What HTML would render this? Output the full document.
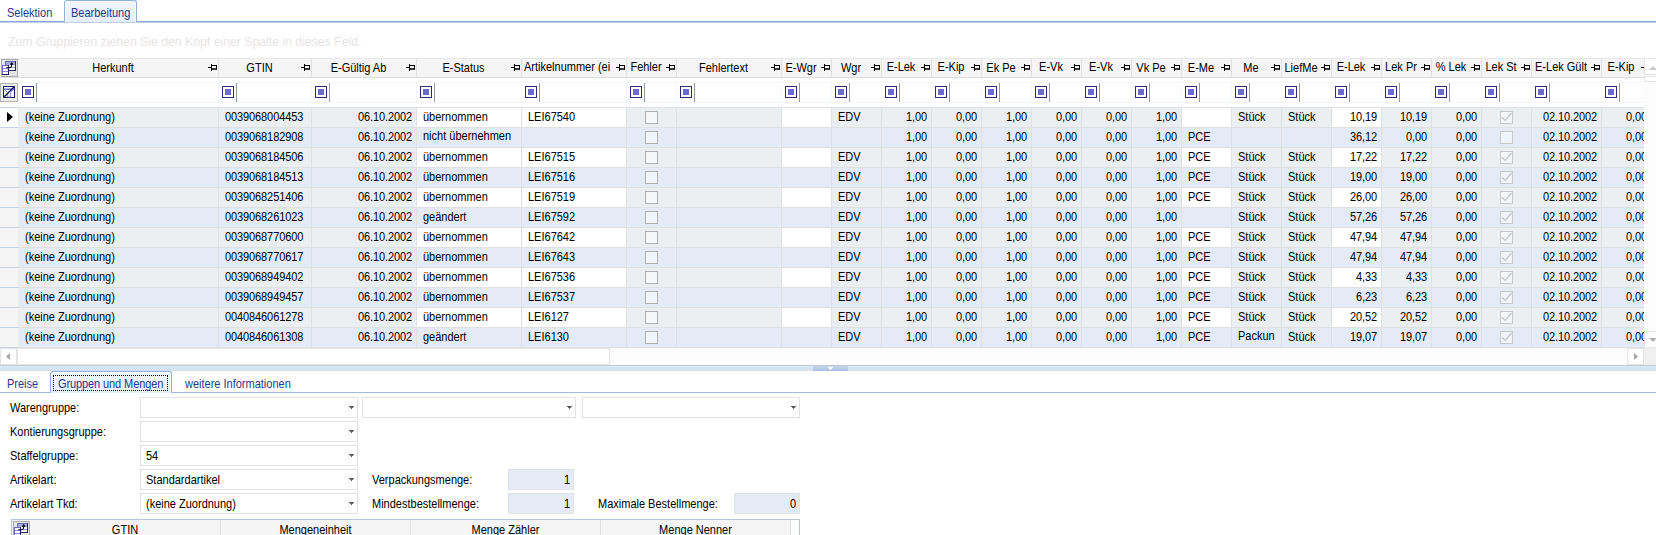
<!DOCTYPE html>
<html lang="de"><head><meta charset="utf-8"><title>Bearbeitung</title>
<style>
*,*:before,*:after{box-sizing:border-box;margin:0;padding:0}
html,body{width:1656px;height:535px;overflow:hidden;background:#fff}
body{position:relative;font-family:"Liberation Sans",Arial,sans-serif;font-size:11px;color:#000;line-height:13px}
i,b{display:block;font-style:normal;font-weight:normal}
.abs{position:absolute}
.t{display:inline-block;transform:scaleY(1.125);transform-origin:0 10px;line-height:13px;white-space:nowrap}
/* top tabs */
.tline{position:absolute;left:0;top:21px;width:1656px;height:1px;background:#86abdf}
.tline2{position:absolute;left:0;top:22px;width:1656px;height:1px;background:#bfcde0}
.tab{position:absolute;color:#1e3c8c;white-space:nowrap}
.tabsel{position:absolute;border:1px solid #8fb1e2;border-bottom:none;border-radius:3px 3px 0 0;background:linear-gradient(#f1f6fd,#e5edf9);box-shadow:inset 1px 1px 0 #fff,inset -1px 0 0 #fff}
.gp{position:absolute;left:8px;top:35px;font-size:12.25px;line-height:14px;color:#e7e4e4;white-space:nowrap}
/* grid */
.grid{position:absolute;left:0;top:58px;width:1656px;height:307px;overflow:hidden}
.hrow{position:absolute;left:0;top:0;height:20px;width:1644px;display:flex;background:#f5f5f5;border-top:1px solid #e8e8e8;border-bottom:1px solid #dcdcdc;overflow:hidden}
.hsel{flex:none;width:19px;height:18px;position:relative;background:#f5f5f5}
.hsel:before{content:"";position:absolute;left:1px;top:0;width:17px;height:18px;background:#e6e6e6;border:1px solid #ababab}
.hsel svg{position:absolute;left:1px;top:0}
.hc{flex:none;height:18px;position:relative;border-right:1px solid #e0e0e0;white-space:nowrap;overflow:hidden}
.hc .ht{position:absolute;left:0;right:11px;top:3px;text-align:center;line-height:13px;overflow:hidden}
.hc.u .ht{top:2px}
.hc.l .ht{top:2px;text-align:left;left:2px;right:14px}
.pin{position:absolute;right:1px;top:5px}
.frow{position:absolute;left:0;top:24px;height:22px;width:1644px;display:flex;overflow:hidden}
.fsel{flex:none;width:19px;height:20px;position:relative}
.fsel:before{content:"";position:absolute;left:0;top:1px;width:18px;height:19px;background:#ededea;border:1px solid #b2b2b2}
.fsel svg{position:absolute;left:3px;top:4px}
.fc{flex:none;height:21px;position:relative;border-top:1px solid #f3f6fc;border-bottom:1px solid #f3f6fc;border-right:1px solid #f3f6fc;margin-top:0}
.fi{position:absolute;left:3px;top:3px;width:12px;height:12px;border:1px solid #2c2c78;background:#fff}
.fi b{position:absolute;left:2px;top:2px;width:6px;height:6px;background:#6a6ad0}
.fl{position:absolute;left:17px;top:0;width:1px;height:19px;background:#9a9a9a}
.rows{position:absolute;left:0;top:49px;width:1644px;height:241px;overflow:hidden;border-top:1px solid #e0e0e0}
.row{display:flex;height:20px;width:1700px}
.rs{flex:none;width:19px;height:20px;background:#f5f5f5;border-right:1px solid #ebebeb;border-bottom:1px solid #c3d3e6;position:relative}
.cur .rs{background:#fff}
.rstop{position:absolute;left:0;top:49px;width:18px;height:1px;background:#c3d3e6}
.tri{position:absolute;left:7px;top:4px;width:0;height:0;border-left:6px solid #000;border-top:5px solid transparent;border-bottom:5px solid transparent}
.c{flex:none;height:20px;border-right:1px solid #e0e0e0;border-bottom:1px solid #e0e0e0;padding:3px 4px 0 6px;white-space:nowrap;overflow:hidden;line-height:13px}
.odd .c{background:#eceff2}
.even .c{background:#e4ebf7}
.odd .c.w{background:#fff}
.c.hi{padding-top:2px}
.c.r{text-align:right}
.c.n{letter-spacing:-0.1px}
.c.cb,.c.cbd{padding:3px 0 0 18px}
.ck{width:13px;height:13px;border:1px solid #b0b0b0;background:rgba(255,255,255,.45)}
.ck.d{border-color:#c8c8c8}
.ck svg{display:block}
/* scrollbars */
.vs{position:absolute;left:1644px;top:0;width:12px;height:290px;background:#fcfcfc}
.hs{position:absolute;left:0;top:290px;width:1644px;height:17px;background:#fdfdfd}
.sb{position:absolute;background:#fff;border:1px solid #e4e4e4}
.corner{position:absolute;left:1644px;top:290px;width:12px;height:17px;background:#f0f0f0}
/* splitter */
.split{position:absolute;left:0;top:365px;width:1656px;height:6px;border-top:1px solid #bcc9da;background:linear-gradient(#e6eef9 0,#d6e3f3 30%,#d2e0f2 100%)}
.split i{position:absolute;left:813px;top:0;width:35px;height:5px;background:linear-gradient(#c6d5ec,#abc0e3)}
.split b{position:absolute;left:828px;top:1px;width:5px;height:3px;background:linear-gradient(#fff,#fff) 0 0/5px 1px no-repeat,linear-gradient(#fff,#fff) 1px 1px/3px 1px no-repeat,linear-gradient(#fff,#fff) 2px 2px/1px 1px no-repeat}
/* lower */
.lline{position:absolute;left:0;top:392px;width:1656px;height:1px;background:#9dbbe3}
.focus{position:absolute;border:1px dotted #000}
.lbl{position:absolute;left:10px;white-space:nowrap}
.combo{position:absolute;height:21px;border:1px solid #e2e2e2;background:#fff;padding:4px 0 0 5px;white-space:nowrap}
.combo:after{content:"";position:absolute;right:3px;top:8px;width:5px;height:3px;background:linear-gradient(#5e5e5e,#5e5e5e) 0 0/5px 1px no-repeat,linear-gradient(#5e5e5e,#5e5e5e) 1px 1px/3px 1px no-repeat,linear-gradient(#5e5e5e,#5e5e5e) 2px 2px/1px 1px no-repeat}
.num{position:absolute;height:21px;border:1px solid #e2e2e2;background:#e4ebf7;padding:4px 3px 0 0;text-align:right}
.g2{position:absolute;left:11px;top:519px;width:789px;height:20px;background:#fff;border:1px solid #b4c6dc;border-bottom:none;overflow:hidden}
.g2 .h{position:absolute;top:0;height:20px;background:#f5f5f5;border-right:1px solid #e0e0e0;text-align:center;line-height:13px;padding-top:4px}

</style></head><body>
<div class="tline"></div>
<div class="tab" style="left:7px;top:7px"><span class="t">Selektion</span></div>
<div class="tabsel" style="left:64px;top:0px;width:73px;height:22px"></div>
<div class="tline2"></div>
<div class="tab" style="left:71px;top:7px"><span class="t">Bearbeitung</span></div>
<div class="gp">Zum Gruppieren ziehen Sie den Kopf einer Spalte in dieses Feld.</div>

<div class="grid">
<div class="hrow">
<div class="hsel"><svg width="17" height="18" viewBox="0 0 17 18"><rect x="4.5" y="2.5" width="10" height="9" fill="#fff" stroke="#6c6cb4"/><path d="M14.5 2v10M4 11.5h11" stroke="#24245e" fill="none"/><rect x="5" y="3" width="9" height="3" fill="#a6a6de"/><path d="M5 8.5h9" stroke="#9c9cd8"/><rect x="1.5" y="6.5" width="6" height="9" fill="#fff" stroke="#6c6cb4"/><path d="M7.5 6v10M1 15.500h7" stroke="#24245e" fill="none"/><path d="M2 9.500h5M2 12.500h5" stroke="#8c8cd0"/><path d="M5.300 8.700h3.500q1.700 0 1.900-3.200" stroke="#000" stroke-width="1.100" fill="none"/><path d="M8.800 5.800h3.800l-1.900-2.800z" fill="#000"/></svg>
</div>
<div class="hc c" style="width:200px"><span class="ht"><span class="t">Herkunft</span></span><svg class="pin" width="9" height="7" viewBox="0 0 9 7"><path d="M0 3.5h3M3.5 0v7M4 1.5h5M4 5h5M8.5 1v4.5" stroke="#000" stroke-width="1" fill="none"/><path d="M4 4.5h5v1h-5z" fill="#000"/></svg></div>
<div class="hc c" style="width:93px"><span class="ht"><span class="t">GTIN</span></span><svg class="pin" width="9" height="7" viewBox="0 0 9 7"><path d="M0 3.5h3M3.5 0v7M4 1.5h5M4 5h5M8.5 1v4.5" stroke="#000" stroke-width="1" fill="none"/><path d="M4 4.5h5v1h-5z" fill="#000"/></svg></div>
<div class="hc c" style="width:105px"><span class="ht"><span class="t">E-Gültig Ab</span></span><svg class="pin" width="9" height="7" viewBox="0 0 9 7"><path d="M0 3.5h3M3.5 0v7M4 1.5h5M4 5h5M8.5 1v4.5" stroke="#000" stroke-width="1" fill="none"/><path d="M4 4.5h5v1h-5z" fill="#000"/></svg></div>
<div class="hc c" style="width:105px"><span class="ht"><span class="t">E-Status</span></span><svg class="pin" width="9" height="7" viewBox="0 0 9 7"><path d="M0 3.5h3M3.5 0v7M4 1.5h5M4 5h5M8.5 1v4.5" stroke="#000" stroke-width="1" fill="none"/><path d="M4 4.5h5v1h-5z" fill="#000"/></svg></div>
<div class="hc l" style="width:105px"><span class="ht"><span class="t">Artikelnummer (ei</span></span><svg class="pin" width="9" height="7" viewBox="0 0 9 7"><path d="M0 3.5h3M3.5 0v7M4 1.5h5M4 5h5M8.5 1v4.5" stroke="#000" stroke-width="1" fill="none"/><path d="M4 4.5h5v1h-5z" fill="#000"/></svg></div>
<div class="hc u" style="width:50px"><span class="ht"><span class="t">Fehler</span></span><svg class="pin" width="9" height="7" viewBox="0 0 9 7"><path d="M0 3.5h3M3.5 0v7M4 1.5h5M4 5h5M8.5 1v4.5" stroke="#000" stroke-width="1" fill="none"/><path d="M4 4.5h5v1h-5z" fill="#000"/></svg></div>
<div class="hc c" style="width:105px"><span class="ht"><span class="t">Fehlertext</span></span><svg class="pin" width="9" height="7" viewBox="0 0 9 7"><path d="M0 3.5h3M3.5 0v7M4 1.5h5M4 5h5M8.5 1v4.5" stroke="#000" stroke-width="1" fill="none"/><path d="M4 4.5h5v1h-5z" fill="#000"/></svg></div>
<div class="hc c" style="width:50px"><span class="ht"><span class="t">E-Wgr</span></span><svg class="pin" width="9" height="7" viewBox="0 0 9 7"><path d="M0 3.5h3M3.5 0v7M4 1.5h5M4 5h5M8.5 1v4.5" stroke="#000" stroke-width="1" fill="none"/><path d="M4 4.5h5v1h-5z" fill="#000"/></svg></div>
<div class="hc c" style="width:50px"><span class="ht"><span class="t">Wgr</span></span><svg class="pin" width="9" height="7" viewBox="0 0 9 7"><path d="M0 3.5h3M3.5 0v7M4 1.5h5M4 5h5M8.5 1v4.5" stroke="#000" stroke-width="1" fill="none"/><path d="M4 4.5h5v1h-5z" fill="#000"/></svg></div>
<div class="hc u" style="width:50px"><span class="ht"><span class="t">E-Lek</span></span><svg class="pin" width="9" height="7" viewBox="0 0 9 7"><path d="M0 3.5h3M3.5 0v7M4 1.5h5M4 5h5M8.5 1v4.5" stroke="#000" stroke-width="1" fill="none"/><path d="M4 4.5h5v1h-5z" fill="#000"/></svg></div>
<div class="hc u" style="width:50px"><span class="ht"><span class="t">E-Kip</span></span><svg class="pin" width="9" height="7" viewBox="0 0 9 7"><path d="M0 3.5h3M3.5 0v7M4 1.5h5M4 5h5M8.5 1v4.5" stroke="#000" stroke-width="1" fill="none"/><path d="M4 4.5h5v1h-5z" fill="#000"/></svg></div>
<div class="hc c" style="width:50px"><span class="ht"><span class="t">Ek Pe</span></span><svg class="pin" width="9" height="7" viewBox="0 0 9 7"><path d="M0 3.5h3M3.5 0v7M4 1.5h5M4 5h5M8.5 1v4.5" stroke="#000" stroke-width="1" fill="none"/><path d="M4 4.5h5v1h-5z" fill="#000"/></svg></div>
<div class="hc u" style="width:50px"><span class="ht"><span class="t">E-Vk</span></span><svg class="pin" width="9" height="7" viewBox="0 0 9 7"><path d="M0 3.5h3M3.5 0v7M4 1.5h5M4 5h5M8.5 1v4.5" stroke="#000" stroke-width="1" fill="none"/><path d="M4 4.5h5v1h-5z" fill="#000"/></svg></div>
<div class="hc u" style="width:50px"><span class="ht"><span class="t">E-Vk</span></span><svg class="pin" width="9" height="7" viewBox="0 0 9 7"><path d="M0 3.5h3M3.5 0v7M4 1.5h5M4 5h5M8.5 1v4.5" stroke="#000" stroke-width="1" fill="none"/><path d="M4 4.5h5v1h-5z" fill="#000"/></svg></div>
<div class="hc c" style="width:50px"><span class="ht"><span class="t">Vk Pe</span></span><svg class="pin" width="9" height="7" viewBox="0 0 9 7"><path d="M0 3.5h3M3.5 0v7M4 1.5h5M4 5h5M8.5 1v4.5" stroke="#000" stroke-width="1" fill="none"/><path d="M4 4.5h5v1h-5z" fill="#000"/></svg></div>
<div class="hc c" style="width:50px"><span class="ht"><span class="t">E-Me</span></span><svg class="pin" width="9" height="7" viewBox="0 0 9 7"><path d="M0 3.5h3M3.5 0v7M4 1.5h5M4 5h5M8.5 1v4.5" stroke="#000" stroke-width="1" fill="none"/><path d="M4 4.5h5v1h-5z" fill="#000"/></svg></div>
<div class="hc c" style="width:50px"><span class="ht"><span class="t">Me</span></span><svg class="pin" width="9" height="7" viewBox="0 0 9 7"><path d="M0 3.5h3M3.5 0v7M4 1.5h5M4 5h5M8.5 1v4.5" stroke="#000" stroke-width="1" fill="none"/><path d="M4 4.5h5v1h-5z" fill="#000"/></svg></div>
<div class="hc c" style="width:50px"><span class="ht"><span class="t">LiefMe</span></span><svg class="pin" width="9" height="7" viewBox="0 0 9 7"><path d="M0 3.5h3M3.5 0v7M4 1.5h5M4 5h5M8.5 1v4.5" stroke="#000" stroke-width="1" fill="none"/><path d="M4 4.5h5v1h-5z" fill="#000"/></svg></div>
<div class="hc u" style="width:50px"><span class="ht"><span class="t">E-Lek</span></span><svg class="pin" width="9" height="7" viewBox="0 0 9 7"><path d="M0 3.5h3M3.5 0v7M4 1.5h5M4 5h5M8.5 1v4.5" stroke="#000" stroke-width="1" fill="none"/><path d="M4 4.5h5v1h-5z" fill="#000"/></svg></div>
<div class="hc u" style="width:50px"><span class="ht"><span class="t">Lek Pr</span></span><svg class="pin" width="9" height="7" viewBox="0 0 9 7"><path d="M0 3.5h3M3.5 0v7M4 1.5h5M4 5h5M8.5 1v4.5" stroke="#000" stroke-width="1" fill="none"/><path d="M4 4.5h5v1h-5z" fill="#000"/></svg></div>
<div class="hc u" style="width:50px"><span class="ht"><span class="t">% Lek</span></span><svg class="pin" width="9" height="7" viewBox="0 0 9 7"><path d="M0 3.5h3M3.5 0v7M4 1.5h5M4 5h5M8.5 1v4.5" stroke="#000" stroke-width="1" fill="none"/><path d="M4 4.5h5v1h-5z" fill="#000"/></svg></div>
<div class="hc u" style="width:50px"><span class="ht"><span class="t">Lek St</span></span><svg class="pin" width="9" height="7" viewBox="0 0 9 7"><path d="M0 3.5h3M3.5 0v7M4 1.5h5M4 5h5M8.5 1v4.5" stroke="#000" stroke-width="1" fill="none"/><path d="M4 4.5h5v1h-5z" fill="#000"/></svg></div>
<div class="hc u" style="width:70px"><span class="ht"><span class="t">E-Lek Gült</span></span><svg class="pin" width="9" height="7" viewBox="0 0 9 7"><path d="M0 3.5h3M3.5 0v7M4 1.5h5M4 5h5M8.5 1v4.5" stroke="#000" stroke-width="1" fill="none"/><path d="M4 4.5h5v1h-5z" fill="#000"/></svg></div>
<div class="hc u" style="width:50px"><span class="ht"><span class="t">E-Kip</span></span><svg class="pin" width="9" height="7" viewBox="0 0 9 7"><path d="M0 3.5h3M3.5 0v7M4 1.5h5M4 5h5M8.5 1v4.5" stroke="#000" stroke-width="1" fill="none"/><path d="M4 4.5h5v1h-5z" fill="#000"/></svg></div>
</div>
<div class="frow">
<div class="fsel"><svg width="12" height="12" viewBox="0 0 12 12"><rect x="0.500" y="0.500" width="11" height="11" fill="#f6f6f0" stroke="#1e1e64"/><path d="M1.500 3.200H10.500L7.300 6.600V11H4.700V6.600Z" fill="#ffffff" stroke="#7a7ade" stroke-width="0.900"/><path d="M1.200 3.200H10.800" stroke="#6c6cd8" stroke-width="1.200"/><path d="M0.800 11.200L11.200 0.800" stroke="#1e1e64" stroke-width="1.500"/></svg>
</div>
<div class="fc" style="width:200px"><i class="fi"><b></b></i><i class="fl"></i></div>
<div class="fc" style="width:93px"><i class="fi"><b></b></i><i class="fl"></i></div>
<div class="fc" style="width:105px"><i class="fi"><b></b></i><i class="fl"></i></div>
<div class="fc" style="width:105px"><i class="fi"><b></b></i><i class="fl"></i></div>
<div class="fc" style="width:105px"><i class="fi"><b></b></i><i class="fl"></i></div>
<div class="fc" style="width:50px"><i class="fi"><b></b></i><i class="fl"></i></div>
<div class="fc" style="width:105px"><i class="fi"><b></b></i><i class="fl"></i></div>
<div class="fc" style="width:50px"><i class="fi"><b></b></i><i class="fl"></i></div>
<div class="fc" style="width:50px"><i class="fi"><b></b></i><i class="fl"></i></div>
<div class="fc" style="width:50px"><i class="fi"><b></b></i><i class="fl"></i></div>
<div class="fc" style="width:50px"><i class="fi"><b></b></i><i class="fl"></i></div>
<div class="fc" style="width:50px"><i class="fi"><b></b></i><i class="fl"></i></div>
<div class="fc" style="width:50px"><i class="fi"><b></b></i><i class="fl"></i></div>
<div class="fc" style="width:50px"><i class="fi"><b></b></i><i class="fl"></i></div>
<div class="fc" style="width:50px"><i class="fi"><b></b></i><i class="fl"></i></div>
<div class="fc" style="width:50px"><i class="fi"><b></b></i><i class="fl"></i></div>
<div class="fc" style="width:50px"><i class="fi"><b></b></i><i class="fl"></i></div>
<div class="fc" style="width:50px"><i class="fi"><b></b></i><i class="fl"></i></div>
<div class="fc" style="width:50px"><i class="fi"><b></b></i><i class="fl"></i></div>
<div class="fc" style="width:50px"><i class="fi"><b></b></i><i class="fl"></i></div>
<div class="fc" style="width:50px"><i class="fi"><b></b></i><i class="fl"></i></div>
<div class="fc" style="width:50px"><i class="fi"><b></b></i><i class="fl"></i></div>
<div class="fc" style="width:70px"><i class="fi"><b></b></i><i class="fl"></i></div>
<div class="fc" style="width:50px"><i class="fi"><b></b></i><i class="fl"></i></div>
</div>
<div class="rows">
<div class="row odd cur">
<div class="rs"><i class="tri"></i></div>
<div class="c l" style="width:200px"><span class="t">(keine Zuordnung)</span></div>
<div class="c l n" style="width:93px"><span class="t">0039068004453</span></div>
<div class="c r n" style="width:105px"><span class="t">06.10.2002</span></div>
<div class="c l w" style="width:105px"><span class="t">übernommen</span></div>
<div class="c l w" style="width:105px"><span class="t">LEI67540</span></div>
<div class="c cb" style="width:50px"><i class="ck"></i></div>
<div class="c l" style="width:105px"></div>
<div class="c l w" style="width:50px"></div>
<div class="c l" style="width:50px"><span class="t">EDV</span></div>
<div class="c r n" style="width:50px"><span class="t">1,00</span></div>
<div class="c r n" style="width:50px"><span class="t">0,00</span></div>
<div class="c r n" style="width:50px"><span class="t">1,00</span></div>
<div class="c r n" style="width:50px"><span class="t">0,00</span></div>
<div class="c r n" style="width:50px"><span class="t">0,00</span></div>
<div class="c r n" style="width:50px"><span class="t">1,00</span></div>
<div class="c l w" style="width:50px"></div>
<div class="c l" style="width:50px"><span class="t">Stück</span></div>
<div class="c l" style="width:50px"><span class="t">Stück</span></div>
<div class="c r n w" style="width:50px"><span class="t">10,19</span></div>
<div class="c r n" style="width:50px"><span class="t">10,19</span></div>
<div class="c r n" style="width:50px"><span class="t">0,00</span></div>
<div class="c cbd" style="width:50px"><i class="ck d"><svg width="11" height="11" viewBox="0 0 11 11"><path d="M1 5.5L4.300 8.500L10.500 1" stroke="#c2c2c2" stroke-width="1.200" fill="none"/></svg></i></div>
<div class="c r n" style="width:70px"><span class="t">02.10.2002</span></div>
<div class="c r n" style="width:50px"><span class="t">0,00</span></div>
</div>
<div class="row even">
<div class="rs"></div>
<div class="c l" style="width:200px"><span class="t">(keine Zuordnung)</span></div>
<div class="c l n" style="width:93px"><span class="t">0039068182908</span></div>
<div class="c r n" style="width:105px"><span class="t">06.10.2002</span></div>
<div class="c l hi" style="width:105px"><span class="t">nicht übernehmen</span></div>
<div class="c l" style="width:105px"></div>
<div class="c cb" style="width:50px"><i class="ck"></i></div>
<div class="c l" style="width:105px"></div>
<div class="c l" style="width:50px"></div>
<div class="c l" style="width:50px"></div>
<div class="c r n" style="width:50px"><span class="t">1,00</span></div>
<div class="c r n" style="width:50px"><span class="t">0,00</span></div>
<div class="c r n" style="width:50px"><span class="t">1,00</span></div>
<div class="c r n" style="width:50px"><span class="t">0,00</span></div>
<div class="c r n" style="width:50px"><span class="t">0,00</span></div>
<div class="c r n" style="width:50px"><span class="t">1,00</span></div>
<div class="c l" style="width:50px"><span class="t">PCE</span></div>
<div class="c l" style="width:50px"></div>
<div class="c l" style="width:50px"></div>
<div class="c r n" style="width:50px"><span class="t">36,12</span></div>
<div class="c r n" style="width:50px"><span class="t">0,00</span></div>
<div class="c r n" style="width:50px"><span class="t">0,00</span></div>
<div class="c cbd" style="width:50px"><i class="ck d"></i></div>
<div class="c r n" style="width:70px"><span class="t">02.10.2002</span></div>
<div class="c r n" style="width:50px"><span class="t">0,00</span></div>
</div>
<div class="row odd">
<div class="rs"></div>
<div class="c l" style="width:200px"><span class="t">(keine Zuordnung)</span></div>
<div class="c l n" style="width:93px"><span class="t">0039068184506</span></div>
<div class="c r n" style="width:105px"><span class="t">06.10.2002</span></div>
<div class="c l w" style="width:105px"><span class="t">übernommen</span></div>
<div class="c l w" style="width:105px"><span class="t">LEI67515</span></div>
<div class="c cb" style="width:50px"><i class="ck"></i></div>
<div class="c l" style="width:105px"></div>
<div class="c l w" style="width:50px"></div>
<div class="c l" style="width:50px"><span class="t">EDV</span></div>
<div class="c r n" style="width:50px"><span class="t">1,00</span></div>
<div class="c r n" style="width:50px"><span class="t">0,00</span></div>
<div class="c r n" style="width:50px"><span class="t">1,00</span></div>
<div class="c r n" style="width:50px"><span class="t">0,00</span></div>
<div class="c r n" style="width:50px"><span class="t">0,00</span></div>
<div class="c r n" style="width:50px"><span class="t">1,00</span></div>
<div class="c l w" style="width:50px"><span class="t">PCE</span></div>
<div class="c l" style="width:50px"><span class="t">Stück</span></div>
<div class="c l" style="width:50px"><span class="t">Stück</span></div>
<div class="c r n w" style="width:50px"><span class="t">17,22</span></div>
<div class="c r n" style="width:50px"><span class="t">17,22</span></div>
<div class="c r n" style="width:50px"><span class="t">0,00</span></div>
<div class="c cbd" style="width:50px"><i class="ck d"><svg width="11" height="11" viewBox="0 0 11 11"><path d="M1 5.5L4.300 8.500L10.500 1" stroke="#c2c2c2" stroke-width="1.200" fill="none"/></svg></i></div>
<div class="c r n" style="width:70px"><span class="t">02.10.2002</span></div>
<div class="c r n" style="width:50px"><span class="t">0,00</span></div>
</div>
<div class="row even">
<div class="rs"></div>
<div class="c l" style="width:200px"><span class="t">(keine Zuordnung)</span></div>
<div class="c l n" style="width:93px"><span class="t">0039068184513</span></div>
<div class="c r n" style="width:105px"><span class="t">06.10.2002</span></div>
<div class="c l" style="width:105px"><span class="t">übernommen</span></div>
<div class="c l" style="width:105px"><span class="t">LEI67516</span></div>
<div class="c cb" style="width:50px"><i class="ck"></i></div>
<div class="c l" style="width:105px"></div>
<div class="c l" style="width:50px"></div>
<div class="c l" style="width:50px"><span class="t">EDV</span></div>
<div class="c r n" style="width:50px"><span class="t">1,00</span></div>
<div class="c r n" style="width:50px"><span class="t">0,00</span></div>
<div class="c r n" style="width:50px"><span class="t">1,00</span></div>
<div class="c r n" style="width:50px"><span class="t">0,00</span></div>
<div class="c r n" style="width:50px"><span class="t">0,00</span></div>
<div class="c r n" style="width:50px"><span class="t">1,00</span></div>
<div class="c l" style="width:50px"><span class="t">PCE</span></div>
<div class="c l" style="width:50px"><span class="t">Stück</span></div>
<div class="c l" style="width:50px"><span class="t">Stück</span></div>
<div class="c r n" style="width:50px"><span class="t">19,00</span></div>
<div class="c r n" style="width:50px"><span class="t">19,00</span></div>
<div class="c r n" style="width:50px"><span class="t">0,00</span></div>
<div class="c cbd" style="width:50px"><i class="ck d"><svg width="11" height="11" viewBox="0 0 11 11"><path d="M1 5.5L4.300 8.500L10.500 1" stroke="#c2c2c2" stroke-width="1.200" fill="none"/></svg></i></div>
<div class="c r n" style="width:70px"><span class="t">02.10.2002</span></div>
<div class="c r n" style="width:50px"><span class="t">0,00</span></div>
</div>
<div class="row odd">
<div class="rs"></div>
<div class="c l" style="width:200px"><span class="t">(keine Zuordnung)</span></div>
<div class="c l n" style="width:93px"><span class="t">0039068251406</span></div>
<div class="c r n" style="width:105px"><span class="t">06.10.2002</span></div>
<div class="c l w" style="width:105px"><span class="t">übernommen</span></div>
<div class="c l w" style="width:105px"><span class="t">LEI67519</span></div>
<div class="c cb" style="width:50px"><i class="ck"></i></div>
<div class="c l" style="width:105px"></div>
<div class="c l w" style="width:50px"></div>
<div class="c l" style="width:50px"><span class="t">EDV</span></div>
<div class="c r n" style="width:50px"><span class="t">1,00</span></div>
<div class="c r n" style="width:50px"><span class="t">0,00</span></div>
<div class="c r n" style="width:50px"><span class="t">1,00</span></div>
<div class="c r n" style="width:50px"><span class="t">0,00</span></div>
<div class="c r n" style="width:50px"><span class="t">0,00</span></div>
<div class="c r n" style="width:50px"><span class="t">1,00</span></div>
<div class="c l w" style="width:50px"><span class="t">PCE</span></div>
<div class="c l" style="width:50px"><span class="t">Stück</span></div>
<div class="c l" style="width:50px"><span class="t">Stück</span></div>
<div class="c r n w" style="width:50px"><span class="t">26,00</span></div>
<div class="c r n" style="width:50px"><span class="t">26,00</span></div>
<div class="c r n" style="width:50px"><span class="t">0,00</span></div>
<div class="c cbd" style="width:50px"><i class="ck d"><svg width="11" height="11" viewBox="0 0 11 11"><path d="M1 5.5L4.300 8.500L10.500 1" stroke="#c2c2c2" stroke-width="1.200" fill="none"/></svg></i></div>
<div class="c r n" style="width:70px"><span class="t">02.10.2002</span></div>
<div class="c r n" style="width:50px"><span class="t">0,00</span></div>
</div>
<div class="row even">
<div class="rs"></div>
<div class="c l" style="width:200px"><span class="t">(keine Zuordnung)</span></div>
<div class="c l n" style="width:93px"><span class="t">0039068261023</span></div>
<div class="c r n" style="width:105px"><span class="t">06.10.2002</span></div>
<div class="c l" style="width:105px"><span class="t">geändert</span></div>
<div class="c l" style="width:105px"><span class="t">LEI67592</span></div>
<div class="c cb" style="width:50px"><i class="ck"></i></div>
<div class="c l" style="width:105px"></div>
<div class="c l" style="width:50px"></div>
<div class="c l" style="width:50px"><span class="t">EDV</span></div>
<div class="c r n" style="width:50px"><span class="t">1,00</span></div>
<div class="c r n" style="width:50px"><span class="t">0,00</span></div>
<div class="c r n" style="width:50px"><span class="t">1,00</span></div>
<div class="c r n" style="width:50px"><span class="t">0,00</span></div>
<div class="c r n" style="width:50px"><span class="t">0,00</span></div>
<div class="c r n" style="width:50px"><span class="t">1,00</span></div>
<div class="c l" style="width:50px"></div>
<div class="c l" style="width:50px"><span class="t">Stück</span></div>
<div class="c l" style="width:50px"><span class="t">Stück</span></div>
<div class="c r n" style="width:50px"><span class="t">57,26</span></div>
<div class="c r n" style="width:50px"><span class="t">57,26</span></div>
<div class="c r n" style="width:50px"><span class="t">0,00</span></div>
<div class="c cbd" style="width:50px"><i class="ck d"><svg width="11" height="11" viewBox="0 0 11 11"><path d="M1 5.5L4.300 8.500L10.500 1" stroke="#c2c2c2" stroke-width="1.200" fill="none"/></svg></i></div>
<div class="c r n" style="width:70px"><span class="t">02.10.2002</span></div>
<div class="c r n" style="width:50px"><span class="t">0,00</span></div>
</div>
<div class="row odd">
<div class="rs"></div>
<div class="c l" style="width:200px"><span class="t">(keine Zuordnung)</span></div>
<div class="c l n" style="width:93px"><span class="t">0039068770600</span></div>
<div class="c r n" style="width:105px"><span class="t">06.10.2002</span></div>
<div class="c l w" style="width:105px"><span class="t">übernommen</span></div>
<div class="c l w" style="width:105px"><span class="t">LEI67642</span></div>
<div class="c cb" style="width:50px"><i class="ck"></i></div>
<div class="c l" style="width:105px"></div>
<div class="c l w" style="width:50px"></div>
<div class="c l" style="width:50px"><span class="t">EDV</span></div>
<div class="c r n" style="width:50px"><span class="t">1,00</span></div>
<div class="c r n" style="width:50px"><span class="t">0,00</span></div>
<div class="c r n" style="width:50px"><span class="t">1,00</span></div>
<div class="c r n" style="width:50px"><span class="t">0,00</span></div>
<div class="c r n" style="width:50px"><span class="t">0,00</span></div>
<div class="c r n" style="width:50px"><span class="t">1,00</span></div>
<div class="c l w" style="width:50px"><span class="t">PCE</span></div>
<div class="c l" style="width:50px"><span class="t">Stück</span></div>
<div class="c l" style="width:50px"><span class="t">Stück</span></div>
<div class="c r n w" style="width:50px"><span class="t">47,94</span></div>
<div class="c r n" style="width:50px"><span class="t">47,94</span></div>
<div class="c r n" style="width:50px"><span class="t">0,00</span></div>
<div class="c cbd" style="width:50px"><i class="ck d"><svg width="11" height="11" viewBox="0 0 11 11"><path d="M1 5.5L4.300 8.500L10.500 1" stroke="#c2c2c2" stroke-width="1.200" fill="none"/></svg></i></div>
<div class="c r n" style="width:70px"><span class="t">02.10.2002</span></div>
<div class="c r n" style="width:50px"><span class="t">0,00</span></div>
</div>
<div class="row even">
<div class="rs"></div>
<div class="c l" style="width:200px"><span class="t">(keine Zuordnung)</span></div>
<div class="c l n" style="width:93px"><span class="t">0039068770617</span></div>
<div class="c r n" style="width:105px"><span class="t">06.10.2002</span></div>
<div class="c l" style="width:105px"><span class="t">übernommen</span></div>
<div class="c l" style="width:105px"><span class="t">LEI67643</span></div>
<div class="c cb" style="width:50px"><i class="ck"></i></div>
<div class="c l" style="width:105px"></div>
<div class="c l" style="width:50px"></div>
<div class="c l" style="width:50px"><span class="t">EDV</span></div>
<div class="c r n" style="width:50px"><span class="t">1,00</span></div>
<div class="c r n" style="width:50px"><span class="t">0,00</span></div>
<div class="c r n" style="width:50px"><span class="t">1,00</span></div>
<div class="c r n" style="width:50px"><span class="t">0,00</span></div>
<div class="c r n" style="width:50px"><span class="t">0,00</span></div>
<div class="c r n" style="width:50px"><span class="t">1,00</span></div>
<div class="c l" style="width:50px"><span class="t">PCE</span></div>
<div class="c l" style="width:50px"><span class="t">Stück</span></div>
<div class="c l" style="width:50px"><span class="t">Stück</span></div>
<div class="c r n" style="width:50px"><span class="t">47,94</span></div>
<div class="c r n" style="width:50px"><span class="t">47,94</span></div>
<div class="c r n" style="width:50px"><span class="t">0,00</span></div>
<div class="c cbd" style="width:50px"><i class="ck d"><svg width="11" height="11" viewBox="0 0 11 11"><path d="M1 5.5L4.300 8.500L10.500 1" stroke="#c2c2c2" stroke-width="1.200" fill="none"/></svg></i></div>
<div class="c r n" style="width:70px"><span class="t">02.10.2002</span></div>
<div class="c r n" style="width:50px"><span class="t">0,00</span></div>
</div>
<div class="row odd">
<div class="rs"></div>
<div class="c l" style="width:200px"><span class="t">(keine Zuordnung)</span></div>
<div class="c l n" style="width:93px"><span class="t">0039068949402</span></div>
<div class="c r n" style="width:105px"><span class="t">06.10.2002</span></div>
<div class="c l w" style="width:105px"><span class="t">übernommen</span></div>
<div class="c l w" style="width:105px"><span class="t">LEI67536</span></div>
<div class="c cb" style="width:50px"><i class="ck"></i></div>
<div class="c l" style="width:105px"></div>
<div class="c l w" style="width:50px"></div>
<div class="c l" style="width:50px"><span class="t">EDV</span></div>
<div class="c r n" style="width:50px"><span class="t">1,00</span></div>
<div class="c r n" style="width:50px"><span class="t">0,00</span></div>
<div class="c r n" style="width:50px"><span class="t">1,00</span></div>
<div class="c r n" style="width:50px"><span class="t">0,00</span></div>
<div class="c r n" style="width:50px"><span class="t">0,00</span></div>
<div class="c r n" style="width:50px"><span class="t">1,00</span></div>
<div class="c l w" style="width:50px"><span class="t">PCE</span></div>
<div class="c l" style="width:50px"><span class="t">Stück</span></div>
<div class="c l" style="width:50px"><span class="t">Stück</span></div>
<div class="c r n w" style="width:50px"><span class="t">4,33</span></div>
<div class="c r n" style="width:50px"><span class="t">4,33</span></div>
<div class="c r n" style="width:50px"><span class="t">0,00</span></div>
<div class="c cbd" style="width:50px"><i class="ck d"><svg width="11" height="11" viewBox="0 0 11 11"><path d="M1 5.5L4.300 8.500L10.500 1" stroke="#c2c2c2" stroke-width="1.200" fill="none"/></svg></i></div>
<div class="c r n" style="width:70px"><span class="t">02.10.2002</span></div>
<div class="c r n" style="width:50px"><span class="t">0,00</span></div>
</div>
<div class="row even">
<div class="rs"></div>
<div class="c l" style="width:200px"><span class="t">(keine Zuordnung)</span></div>
<div class="c l n" style="width:93px"><span class="t">0039068949457</span></div>
<div class="c r n" style="width:105px"><span class="t">06.10.2002</span></div>
<div class="c l" style="width:105px"><span class="t">übernommen</span></div>
<div class="c l" style="width:105px"><span class="t">LEI67537</span></div>
<div class="c cb" style="width:50px"><i class="ck"></i></div>
<div class="c l" style="width:105px"></div>
<div class="c l" style="width:50px"></div>
<div class="c l" style="width:50px"><span class="t">EDV</span></div>
<div class="c r n" style="width:50px"><span class="t">1,00</span></div>
<div class="c r n" style="width:50px"><span class="t">0,00</span></div>
<div class="c r n" style="width:50px"><span class="t">1,00</span></div>
<div class="c r n" style="width:50px"><span class="t">0,00</span></div>
<div class="c r n" style="width:50px"><span class="t">0,00</span></div>
<div class="c r n" style="width:50px"><span class="t">1,00</span></div>
<div class="c l" style="width:50px"><span class="t">PCE</span></div>
<div class="c l" style="width:50px"><span class="t">Stück</span></div>
<div class="c l" style="width:50px"><span class="t">Stück</span></div>
<div class="c r n" style="width:50px"><span class="t">6,23</span></div>
<div class="c r n" style="width:50px"><span class="t">6,23</span></div>
<div class="c r n" style="width:50px"><span class="t">0,00</span></div>
<div class="c cbd" style="width:50px"><i class="ck d"><svg width="11" height="11" viewBox="0 0 11 11"><path d="M1 5.5L4.300 8.500L10.500 1" stroke="#c2c2c2" stroke-width="1.200" fill="none"/></svg></i></div>
<div class="c r n" style="width:70px"><span class="t">02.10.2002</span></div>
<div class="c r n" style="width:50px"><span class="t">0,00</span></div>
</div>
<div class="row odd">
<div class="rs"></div>
<div class="c l" style="width:200px"><span class="t">(keine Zuordnung)</span></div>
<div class="c l n" style="width:93px"><span class="t">0040846061278</span></div>
<div class="c r n" style="width:105px"><span class="t">06.10.2002</span></div>
<div class="c l w" style="width:105px"><span class="t">übernommen</span></div>
<div class="c l w" style="width:105px"><span class="t">LEI6127</span></div>
<div class="c cb" style="width:50px"><i class="ck"></i></div>
<div class="c l" style="width:105px"></div>
<div class="c l w" style="width:50px"></div>
<div class="c l" style="width:50px"><span class="t">EDV</span></div>
<div class="c r n" style="width:50px"><span class="t">1,00</span></div>
<div class="c r n" style="width:50px"><span class="t">0,00</span></div>
<div class="c r n" style="width:50px"><span class="t">1,00</span></div>
<div class="c r n" style="width:50px"><span class="t">0,00</span></div>
<div class="c r n" style="width:50px"><span class="t">0,00</span></div>
<div class="c r n" style="width:50px"><span class="t">1,00</span></div>
<div class="c l w" style="width:50px"><span class="t">PCE</span></div>
<div class="c l" style="width:50px"><span class="t">Stück</span></div>
<div class="c l" style="width:50px"><span class="t">Stück</span></div>
<div class="c r n w" style="width:50px"><span class="t">20,52</span></div>
<div class="c r n" style="width:50px"><span class="t">20,52</span></div>
<div class="c r n" style="width:50px"><span class="t">0,00</span></div>
<div class="c cbd" style="width:50px"><i class="ck d"><svg width="11" height="11" viewBox="0 0 11 11"><path d="M1 5.5L4.300 8.500L10.500 1" stroke="#c2c2c2" stroke-width="1.200" fill="none"/></svg></i></div>
<div class="c r n" style="width:70px"><span class="t">02.10.2002</span></div>
<div class="c r n" style="width:50px"><span class="t">0,00</span></div>
</div>
<div class="row even">
<div class="rs"></div>
<div class="c l" style="width:200px"><span class="t">(keine Zuordnung)</span></div>
<div class="c l n" style="width:93px"><span class="t">0040846061308</span></div>
<div class="c r n" style="width:105px"><span class="t">06.10.2002</span></div>
<div class="c l" style="width:105px"><span class="t">geändert</span></div>
<div class="c l" style="width:105px"><span class="t">LEI6130</span></div>
<div class="c cb" style="width:50px"><i class="ck"></i></div>
<div class="c l" style="width:105px"></div>
<div class="c l" style="width:50px"></div>
<div class="c l" style="width:50px"><span class="t">EDV</span></div>
<div class="c r n" style="width:50px"><span class="t">1,00</span></div>
<div class="c r n" style="width:50px"><span class="t">0,00</span></div>
<div class="c r n" style="width:50px"><span class="t">1,00</span></div>
<div class="c r n" style="width:50px"><span class="t">0,00</span></div>
<div class="c r n" style="width:50px"><span class="t">0,00</span></div>
<div class="c r n" style="width:50px"><span class="t">1,00</span></div>
<div class="c l" style="width:50px"><span class="t">PCE</span></div>
<div class="c l hi" style="width:50px"><span class="t">Packun</span></div>
<div class="c l" style="width:50px"><span class="t">Stück</span></div>
<div class="c r n" style="width:50px"><span class="t">19,07</span></div>
<div class="c r n" style="width:50px"><span class="t">19,07</span></div>
<div class="c r n" style="width:50px"><span class="t">0,00</span></div>
<div class="c cbd" style="width:50px"><i class="ck d"><svg width="11" height="11" viewBox="0 0 11 11"><path d="M1 5.5L4.300 8.500L10.500 1" stroke="#c2c2c2" stroke-width="1.200" fill="none"/></svg></i></div>
<div class="c r n" style="width:70px"><span class="t">02.10.2002</span></div>
<div class="c r n" style="width:50px"><span class="t">0,00</span></div>
</div>
</div>
<div class="rstop"></div>
<div class="vs"><div class="sb" style="left:0;top:0;width:13px;height:17px"></div><svg class="abs" style="left:5px;top:8px" width="8" height="4" viewBox="0 0 8 4"><path d="M0 4L4 0L8 4z" fill="#c8c8c8"/></svg><div class="sb" style="left:0;top:18px;width:13px;height:6px"></div><div class="sb" style="left:0;top:273px;width:13px;height:17px"></div><svg class="abs" style="left:5px;top:280px" width="8" height="4" viewBox="0 0 8 4"><path d="M0 0L4 4L8 0z" fill="#b0b0b0"/></svg></div>
<div class="hs"><div class="sb" style="left:0;top:0;width:17px;height:17px"></div><svg class="abs" style="left:6px;top:5px" width="4" height="7" viewBox="0 0 4 7"><path d="M4 0L0 3.5L4 7z" fill="#a6a6a6"/></svg><div class="sb" style="left:17px;top:0;width:593px;height:17px"></div><div class="sb" style="left:1627px;top:0;width:17px;height:17px"></div><svg class="abs" style="left:1634px;top:5px" width="4" height="7" viewBox="0 0 4 7"><path d="M0 0L4 3.5L0 7z" fill="#a6a6a6"/></svg></div>
<div class="corner"></div>

</div>
<div class="split"><i></i><b></b></div>
<div class="lline"></div>
<div class="tab" style="left:7px;top:378px"><span class="t">Preise</span></div>
<div class="tabsel" style="left:50px;top:371px;width:122px;height:22px"></div>
<div class="focus" style="left:53px;top:375px;width:115px;height:16px"></div>
<div class="tab" style="left:58px;top:378px;letter-spacing:-0.1px"><span class="t">Gruppen und Mengen</span></div>
<div class="tab" style="left:185px;top:378px"><span class="t">weitere Informationen</span></div>
<div class="lbl" style="top:402px"><span class="t">Warengruppe:</span></div>
<div class="lbl" style="top:426px"><span class="t">Kontierungsgruppe:</span></div>
<div class="lbl" style="top:450px"><span class="t">Staffelgruppe:</span></div>
<div class="lbl" style="top:474px"><span class="t">Artikelart:</span></div>
<div class="lbl" style="top:498px"><span class="t">Artikelart Tkd:</span></div>
<div class="combo" style="left:140px;top:397px;width:218px"></div>
<div class="combo" style="left:362px;top:397px;width:214px"></div>
<div class="combo" style="left:582px;top:397px;width:218px"></div>
<div class="combo" style="left:140px;top:421px;width:218px"></div>
<div class="combo" style="left:140px;top:445px;width:218px"><span class="t">54</span></div>
<div class="combo" style="left:140px;top:469px;width:218px"><span class="t">Standardartikel</span></div>
<div class="combo" style="left:140px;top:493px;width:218px"><span class="t">(keine Zuordnung)</span></div>
<div class="lbl" style="left:372px;top:474px"><span class="t">Verpackungsmenge:</span></div>
<div class="lbl" style="left:372px;top:498px"><span class="t">Mindestbestellmenge:</span></div>
<div class="lbl" style="left:598px;top:498px"><span class="t">Maximale Bestellmenge:</span></div>
<div class="num" style="left:508px;top:469px;width:66px"><span class="t">1</span></div>
<div class="num" style="left:508px;top:493px;width:66px"><span class="t">1</span></div>
<div class="num" style="left:734px;top:493px;width:66px"><span class="t">0</span></div>
<div class="g2"><div class="h" style="left:0;width:209px;padding-left:18px"><span class="t">GTIN</span></div><div class="h" style="left:209px;width:190px"><span class="t">Mengeneinheit</span></div><div class="h" style="left:399px;width:190px"><span class="t">Menge Zähler</span></div><div class="h" style="left:589px;width:190px"><span class="t">Menge Nenner</span></div>
<div class="abs" style="left:1px;top:1px;width:17px;height:18px;background:#e6e6e6;border:1px solid #ababab"></div><div class="abs" style="left:1px;top:1px"><svg width="17" height="18" viewBox="0 0 17 18"><rect x="4.5" y="2.5" width="10" height="9" fill="#fff" stroke="#6c6cb4"/><path d="M14.5 2v10M4 11.5h11" stroke="#24245e" fill="none"/><rect x="5" y="3" width="9" height="3" fill="#a6a6de"/><path d="M5 8.5h9" stroke="#9c9cd8"/><rect x="1.5" y="6.5" width="6" height="9" fill="#fff" stroke="#6c6cb4"/><path d="M7.5 6v10M1 15.500h7" stroke="#24245e" fill="none"/><path d="M2 9.500h5M2 12.500h5" stroke="#8c8cd0"/><path d="M5.300 8.700h3.500q1.700 0 1.900-3.200" stroke="#000" stroke-width="1.100" fill="none"/><path d="M8.800 5.800h3.800l-1.900-2.800z" fill="#000"/></svg></div></div>

</body></html>
